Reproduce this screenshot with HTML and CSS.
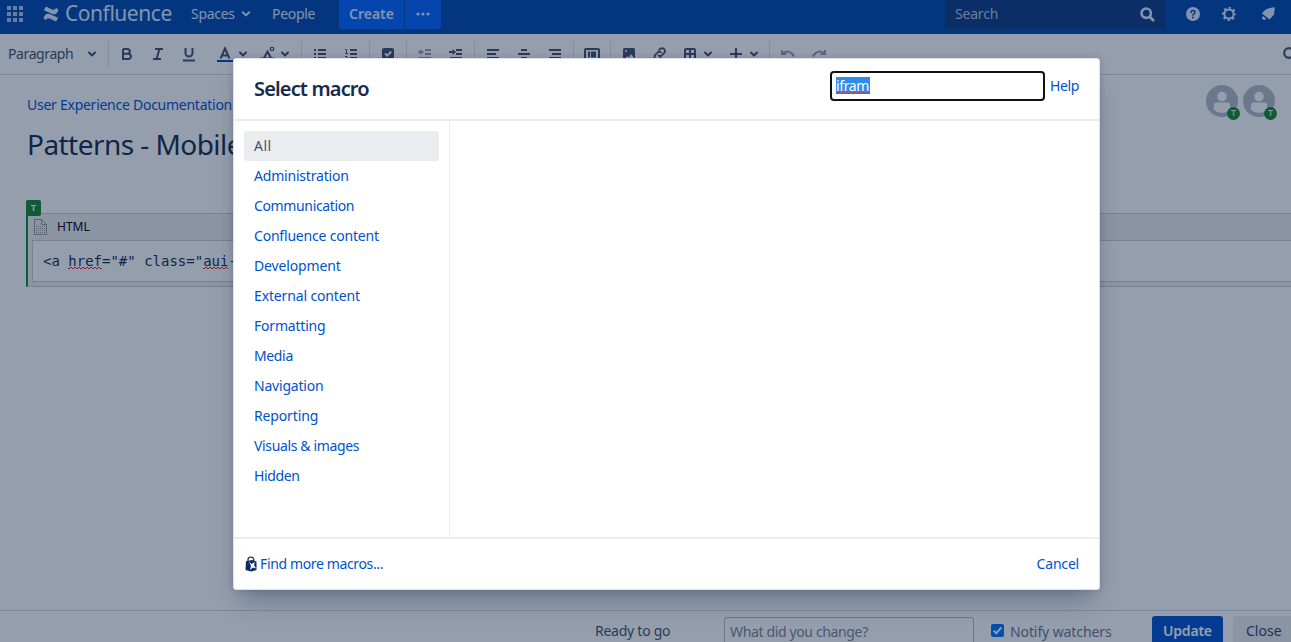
FILE: index.html
```html
<!DOCTYPE html>
<html lang="en">
<head>
<meta charset="utf-8">
<title>Confluence</title>
<link rel="stylesheet" href="styles.css">
</head>
<body>
<svg width="0" height="0" class="defs">
  <symbol id="chev" viewBox="0 0 10 10"><path d="M1.800 3.200 5 6.400 8.200 3.200" fill="none" stroke="currentColor" stroke-width="2" stroke-linecap="round" stroke-linejoin="round"/></symbol>
  <symbol id="user" viewBox="0 0 32 32"><circle cx="16" cy="16" r="16" fill="#b3bac5"/><circle cx="16" cy="11.500" r="4.800" fill="#fff"/><path d="M8 19.500a2 2 0 0 1 2-2h12a2 2 0 0 1 2 2V25a12 12 0 0 1-16 0z" fill="#fff"/></symbol>
</svg>
<div class="page">
  <header class="header">
    <svg class="apps" width="17" height="17" viewBox="0 0 17 17" fill="currentColor"><path d="M0 0h4v4H0zM6 0h4v4H6zM12 0h4v4h-4zM0 6h4v4H0zM6 6h4v4H6zM12 6h4v4h-4zM0 12h4v4H0zM6 12h4v4H6zM12 12h4v4h-4z"/></svg>
    <svg class="mark" width="16" height="16" viewBox="0 0 16 16" fill="currentColor"><path d="M.3 12 2.200 9C4 6.800 6.200 7.600 9 9l6 2.700-1.800 3.800c-3-1.400-6-3.200-8-3.300-1.300 0-1.500.8-2.300 2z"/><path d="M15.700 4 13.800 7C12 9.200 9.800 8.400 7 7L1 4.300 2.800.5c3 1.400 6 3.200 8 3.300 1.300 0 1.500-.8 2.300-2z"/></svg>
    <span class="brand">Confluence</span>
    <span class="nav spaces">Spaces</span><svg class="nchev" width="10" height="10"><use href="#chev"/></svg>
    <span class="nav people">People</span>
    <div class="create"><span>Create</span></div><div class="more"><svg width="14" height="4" viewBox="0 0 14 4" fill="currentColor"><circle cx="2" cy="2" r="1.600"/><circle cx="7" cy="2" r="1.600"/><circle cx="12" cy="2" r="1.600"/></svg></div>
    <div class="search"><span>Search</span><svg width="15" height="15" viewBox="0 0 15 15" fill="none" stroke="currentColor"><circle cx="6.200" cy="6.200" r="4.700" stroke-width="2.600"/><path d="m10 10 3.200 3.200" stroke-width="2.800" stroke-linecap="round"/></svg></div>
    <svg class="hicon help" width="14" height="14" viewBox="0 0 14 14"><circle cx="7" cy="7" r="7" fill="currentColor"/><path d="M5 5.400C5 2.800 9.100 2.900 9 5.300 8.900 6.700 7 6.500 7 8.300" fill="none" stroke="#0049b0" stroke-width="1.500" stroke-linecap="round"/><circle cx="7" cy="10.600" r="1" fill="#0049b0"/></svg>
    <svg class="hicon gear" width="14" height="14" viewBox="0 0 14 14" fill="none" stroke="currentColor"><circle cx="7" cy="7" r="4.600" stroke-width="2"/><circle cx="7" cy="7" r="6.100" stroke-width="1.800" stroke-dasharray="2.400 2.390" stroke-dashoffset="1.200"/></svg>
    <svg class="hicon bell" width="14" height="14" viewBox="0 0 14 14" fill="currentColor"><path d="M13.800.2 13 7.500 8.500 12.500 1 6.500C4 2 8 .8 13.800.2z"/><path d="M2 9.300 5 11.800A2 2 0 1 1 2 9.300z"/></svg>
  </header>
  <div class="toolbar">
    <span class="para">Paragraph</span>
    <svg class="tools" width="1219" height="40" viewBox="72 34 1219 40" fill="none" stroke="#42526e" stroke-width="2">
      <g stroke="none" fill="#dfe1e6"><path d="M108 41h1v26h-1zM301 41h1v26h-1zM369 41h1v26h-1zM406 41h1v26h-1zM474 41h1v26h-1zM573 41h1v26h-1zM610 41h1v26h-1zM769 41h1v26h-1z"/></g>
      <g stroke-linecap="round" stroke-linejoin="round"><path d="m89 52.500 3 3 3-3M240 52.500l3 3 3-3M282 52.500l3 3 3-3M705 52.500l3 3 3-3M751 52.500l3 3 3-3"/></g>
      <path d="M123 49h4.500a2.300 2.300 0 0 1 0 4.700H123M127.500 53.700h.8a2.600 2.600 0 0 1 0 5.300H123V49M155 49h8M153 59h8M159.500 49l-3 10M185.500 48v5a3.400 3.400 0 0 0 7 0v-5M183 60.500h12"/>
      <path d="m220.500 58.500 4.500-10 4.500 10M222 55.500h6M264 58l3.500-6.500L271 58"/><path d="M217 61h16" stroke="#0049b0"/><circle cx="272" cy="49" r="1.700" stroke-width="1.300"/><path d="M260 58.500h14"/>
      <path d="M314 50h2M318 50h8M314 54h2M318 54h8M314 58h2M318 58h8M350 50h7M350 54h7M350 58h7"/><path stroke-width="1" d="M345 49.500h1.500V53M345 53.500h3M345 56.500h2v2h-2"/>
      <rect x="382" y="48" width="12" height="12" rx="2" fill="#42526e" stroke="none"/><path d="m385 53.500 2.200 2.200 4-4" stroke="#fff"/>
      <g stroke="#97a0af"><path d="M418.500 52h5M425 50h6M425 54h6M419 58h12"/><path stroke="none" fill="#97a0af" d="m418 52 3.500-3v6z"/></g>
      <path d="M449 52h5M456 50h6M456 54h6M450 58h12"/><path stroke="none" fill="#42526e" d="m456 52-3.500-3v6z"/>
      <path d="M487 50h12M487 54h9M487 58h12M521 50h6M518 54h12M521 58h6M549 50h12M552 54h9M549 58h12"/>
      <rect x="585" y="49" width="14" height="11" rx="1"/><path d="M588 54.500h2M591 54.500h5" stroke-width="6"/>
      <rect x="623" y="48" width="12" height="12" rx="1.500" fill="#42526e" stroke="none"/><circle cx="626" cy="51" r="1" fill="#fff" stroke="none"/><path d="m625 59 2.500-3 1.500 1.500 2-3.500 3 4" fill="#fff" stroke="none"/>
      <g stroke-width="1.700" stroke-linecap="round"><path d="m659 50 1.500-1.300a2.900 2.900 0 0 1 4 4l-2.500 2.500c-1 1-2.600 1-3.600.2M660.500 57.500 659 59a2.900 2.900 0 0 1-4-4l2.500-2.500c1-1 2.600-1 3.600-.2"/></g>
      <rect x="685" y="49" width="10" height="11" rx="1"/><path d="M690 49v11M685 54h10M730 54h12M736 48v12"/>
      <g stroke="#97a0af"><path d="M782 50v4h4.500M782.500 54c3-4 9-3 11.500 2.500M825 50v4h-4.500M824.500 54c-3-4-9-3-11.500 2.500"/></g>
      <circle cx="1289" cy="53" r="4.800" stroke-width="2.200"/>
    </svg>
  </div>
  <main class="content">
    <div class="crumbs">User Experience Documentation</div>
    <div class="avatars">
      <div class="avatar"><svg width="32" height="32"><use href="#user"/></svg><b>T</b></div>
      <div class="avatar"><svg width="32" height="32"><use href="#user"/></svg><b>T</b></div>
    </div>
    <h1>Patterns - Mobile</h1>
    <section class="macro">
      <b class="flag">T</b>
      <div class="mhead"><svg width="13" height="16" viewBox="0 0 13 16" fill="none" stroke="#999"><path d="M.5.5h7l5 5v10H.5zM7.500.5v5h5"/><path d="M2 7.500h9M2 9.500h9M2 11.500h9M2 13.500h9" stroke-dasharray="1 1"/></svg><span class="mname">HTML</span></div>
      <pre class="code">&lt;a <span class="misspelt">href</span>="#" class="<span class="misspelt">aui</span>-button"&gt;</pre>
    </section>
  </main>
  <footer class="footer">
    <span class="ready">Ready to go</span>
    <div class="comment">What did you change?</div>
    <svg class="check" width="13" height="13" viewBox="0 0 13 13"><rect width="13" height="13" rx="2" fill="#0075ff"/><path d="m2.800 6.800 2.500 2.500 5-6" fill="none" stroke="#fff" stroke-width="2"/></svg>
    <span class="notify">Notify watchers</span>
    <div class="update">Update</div>
    <div class="close">Close</div>
  </footer>
</div>
<div class="blanket"></div>
<div class="dialog">
  <div class="dhead"><h2>Select macro</h2><div class="field"><span class="misspelt">ifram</span></div><a class="dhelp">Help</a></div>
  <div class="dbody">
    <nav class="list">
      <a class="on">All</a>
      <a>Administration</a>
      <a class="tight">Communication</a>
      <a>Confluence content</a>
      <a class="loose">Development</a>
      <a class="loose">External content</a>
      <a>Formatting</a>
      <a class="tight">Media</a>
      <a>Navigation</a>
      <a class="loose">Reporting</a>
      <a class="tight">Visuals &amp; images</a>
      <a class="tight">Hidden</a>
    </nav>
    <div class="results"></div>
  </div>
  <div class="dfoot"><svg width="12" height="16" viewBox="0 0 12 16"><path d="M3 5V3.500C3 .5 8.500.2 8.800 3.500V5" fill="none" stroke="#253858" stroke-width="1.300"/><path d="M1 5.200 7 4l4.500 1.500L11.500 14 6 15.500.5 14z" fill="#0b2c63"/><path d="m4 5.500 2.500 2.500L10 6l-1 3 2 3.500-3-1L5 14l1-4z" fill="#fff"/></svg><a class="find tight">Find more macros...</a><a class="cancel">Cancel</a></div>
</div>
</body>
</html>
```
FILE: styles.css
```css
* { box-sizing: border-box; }
body { margin: 0; width: 1291px; height: 642px; overflow: hidden; position: relative; background: #fff; color: #172b4d; font: 14px/20px "Noto Sans", "Open Sans", sans-serif; }
svg { display: block; flex: none; }
.defs { position: absolute; }
span, a { white-space: nowrap; }
.page { height: 642px; display: flex; flex-direction: column; overflow: hidden; }
.header { height: 34px; flex: none; background: #0049b0; color: #deebff; display: flex; align-items: flex-start; }
.apps { margin: 6px 0 0 7px; color: #b3c6e6; }
.mark { margin: 6px 0 0 19px; }
.brand { margin: 0 0 0 6px; width: 126px; font-size: 21px; line-height: 27px; letter-spacing: -.45px; }
.spaces { width: 50px; margin-top: 4px; }
.nav { letter-spacing: -.3px; }
.nchev { margin-top: 9px; }
.people { width: 67px; margin: 4px 0 0 21px; }
.create, .more { height: 29px; background: #0065ff; padding-top: 4px; font-weight: 600; }
.create { width: 65px; padding-left: 10px; border-radius: 0 0 0 3px; }
.more { width: 36px; margin-left: 1px; padding: 12px 0 0 11px; border-radius: 0 0 3px 0; }
.search { width: 220px; height: 29px; margin-left: 504px; background: #0b3a80; border-radius: 0 0 3px 3px; display: flex; justify-content: space-between; padding: 4px 10px 0; color: #b3c6e6; letter-spacing: -.2px; }
.search svg { margin-top: 3px; color: #deebff; }
.hicon { margin-top: 7px; }
.help { margin-left: 21px; }
.gear { margin-left: 22px; }
.bell { margin-left: 25px; }
.toolbar { height: 41px; flex: none; border-bottom: 1px solid #d5d9e0; display: flex; }
.para { width: 64px; margin: 10px 0 0 8px; color: #42526e; letter-spacing: -.4px; }
.content { height: 535px; flex: none; padding: 10px 0 0 26px; display: grid; grid-template-columns: 1fr 85px; align-content: start; }
.crumbs { padding: 10px 0 0 1px; color: #0052cc; letter-spacing: -.26px; }
.avatars { display: flex; gap: 5px; height: 34px; }
.avatar { position: relative; width: 32px; height: 32px; }
.avatar b { position: absolute; left: 21px; top: 22px; width: 13px; height: 13px; border-radius: 50%; background: #14892c; color: #fff; font: 9px/13px "Liberation Sans", sans-serif; text-align: center; }
h1 { margin: 5px 0 1px 1px; font-size: 28px; line-height: 40px; font-weight: 400; letter-spacing: -.55px; grid-column: 1 / 3; }
.macro { grid-column: 1 / 3; margin-top: 48px; height: 74px; background: #f0f0f0; border: 1px solid #ccc; border-left: 2px solid #14892c; border-right: 0; position: relative; }
.flag { position: absolute; left: -2px; top: -14px; width: 15px; height: 16px; background: #14892c; border-radius: 2px 2px 2px 0; color: #fff; font: bold 9px/16px "Liberation Sans", sans-serif; text-align: center; }
.mhead { display: flex; height: 26px; padding: 5px 0 0 6px; color: #000; }
.mname { margin: -1px 0 0 10px; font-size: 12px; line-height: 17px; }
.code { margin: 0 0 0 4px; height: 42px; border: 1px solid #ccc; border-right: 0; background: #fff; font: 14px/20px "DejaVu Sans Mono", monospace; padding: 10px; color: #172b4d; }
.misspelt { background: linear-gradient(90deg, #e5252b 50%, transparent 0) 0 100% / 4px 1px repeat-x, linear-gradient(90deg, #e5252b 50%, transparent 0) 2px calc(100% - 1px) / 4px 1px repeat-x; }
.footer { flex: none; height: 32px; border-top: 1px solid #d5d9e0; display: flex; }
.footer > * { flex: none; }
.ready { margin: 10px 0 0 595px; width: 129px; color: #42526e; letter-spacing: -.25px; }
.comment { width: 250px; height: 34px; margin-top: 6px; border: 1px solid #b3bac5; border-radius: 3px; padding: 4px 5px; color: #7a869a; letter-spacing: -.36px; }
.check { margin: 13px 0 0 17px; }
.notify { margin: 11px 0 0 6px; width: 142px; color: #6b778c; letter-spacing: -.1px; }
.update { width: 71px; height: 30px; margin-top: 5px; background: #0052cc; border-radius: 3px; color: #fff; font-weight: 600; padding: 5px 11px; letter-spacing: -.2px; }
.close { width: 70px; height: 30px; margin: 5px 0 0 10px; background: #eceef1; border-radius: 3px; padding: 5px 13px; color: #344563; }
.blanket { position: absolute; inset: 0; background: rgba(9, 30, 66, .43); }
.dialog { position: absolute; left: 233px; top: 58px; width: 867px; height: 532px; background: #fff; border: 1px solid #dfe1e6; border-radius: 3px; box-shadow: 0 16px 24px -8px rgba(9, 30, 66, .35), 0 0 6px rgba(9, 30, 66, .15); display: flex; flex-direction: column; }
.dhead { height: 62px; border-bottom: 2px solid #ebecf0; display: flex; padding-left: 20px; }
h2 { margin: 15px 0 0; width: 576px; font-size: 20px; line-height: 30px; font-weight: 600; letter-spacing: -.85px; }
.field { width: 215px; height: 30px; margin-top: 12px; border: 2px solid #101214; border-radius: 4px; padding: 4px; }
.field .misspelt { background-color: #308ce8; color: #fff; display: block; width: 34px; height: 17px; line-height: 17px; letter-spacing: -.4px; }
.dhelp { margin: 17px 0 0 5px; letter-spacing: -.4px; }
.dialog a { color: #0052cc; }
.dbody { flex: 1; display: flex; }
.list { width: 216px; border-right: 1px solid #ebecf0; padding: 10px; display: flex; flex-direction: column; letter-spacing: -.2px; }
.list a { height: 30px; width: 195px; padding: 5px 10px; border-radius: 3px; }
.tight { letter-spacing: -.36px; }
.loose { letter-spacing: -.14px; }
.dialog .list .on { background: #ebecf0; color: #42526e; letter-spacing: .5px; }
.dfoot { height: 52px; border-top: 2px solid #ebecf0; display: flex; align-items: center; padding: 0 20px 0 11px; }
.find { margin-left: 3px; }
.cancel { margin-left: auto; letter-spacing: -.2px; }
```
